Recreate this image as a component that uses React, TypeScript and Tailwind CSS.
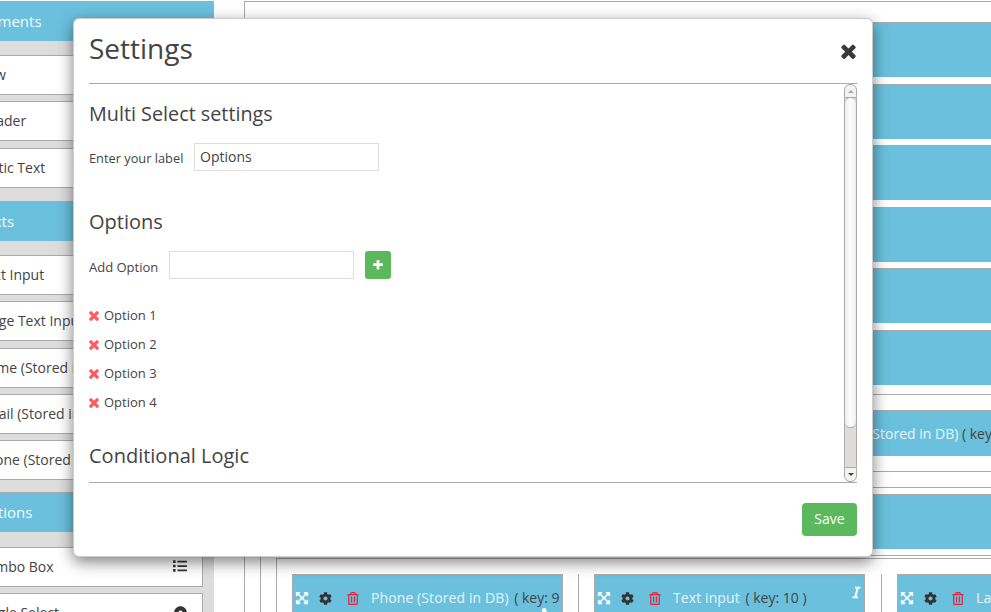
import { FaCog, FaDotCircle, FaExpandArrowsAlt, FaItalic, FaList, FaPhoneAlt, FaRegTrashAlt } from "react-icons/fa";

const elements = ["Row", "Header", "Static Text"];
const texts = ["Text Input", "Large Text Input", "Name (Stored in DB)", "Email (Stored in DB)", "Phone (Stored in DB)"];
const bars = [1, 2, 3, 4, 5, 6];
const options = ["Option 1", "Option 2", "Option 3", "Option 4"];

function TimesIcon({ className }: { className: string }) {
  return (
    <svg viewBox="302 238 1188 1316" className={className} fill="currentColor">
      <path d="M1490 1322q0 40-28 68l-136 136q-28 28-68 28t-68-28l-294-294-294 294q-28 28-68 28t-68-28l-136-136q-28-28-28-68t28-68l294-294-294-294q-28-28-28-68t28-68l136-136q28-28 68-28t68 28l294 294 294-294q28-28 68-28t68 28l136 136q28 28 28 68t-28 68l-294 294 294 294q28 28 28 68z" />
    </svg>
  );
}

function PlusIcon({ className }: { className: string }) {
  return (
    <svg viewBox="192 192 1408 1408" className={className} fill="currentColor">
      <path d="M1600 736v192q0 40-28 68t-68 28h-416v416q0 40-28 68t-68 28h-192q-40 0-68-28t-28-68v-416h-416q-40 0-68-28t-28-68v-192q0-40 28-68t68-28h416v-416q0-40 28-68t68-28h192q40 0 68 28t28 68v416h416q40 0 68 28t28 68z" />
    </svg>
  );
}

function SectionTitle({ title }: { title: string }) {
  return (
    <div className="h-[40px] bg-[#6bc0dd] border-t border-r border-[#aaaaaa] flex items-center text-[15px] text-[#f4fbfd]">
      <span className="ml-[-1px]">{title}</span>
    </div>
  );
}

function Item({ label, icon }: { label: string; icon?: React.ReactNode }) {
  return (
    <div className="h-[40px] mb-[6.3px] mr-[11px] bg-white border-y border-r border-[#aaaaaa] pr-[15px] flex items-center justify-between text-[14px] whitespace-nowrap text-[#444444]">
      <span className="mt-[-1px]">{label}</span>
      {icon}
    </div>
  );
}

function Cell({ name, keyNo, children }: { name: string; keyNo: number; children?: React.ReactNode }) {
  return (
    <div className="relative w-[271px] h-[80px] overflow-hidden whitespace-nowrap bg-[#6bc0dd] border border-[#aaaaaa] pl-[2px] pt-[13px] text-[14px] leading-[20px] text-[#444444]">
      <FaExpandArrowsAlt className="inline-block w-[14px] h-[14px] text-white align-[-2px]" />
      <FaCog className="inline-block w-[13px] h-[13px] ml-[10px] text-[#333333] align-[-2px]" />
      <FaRegTrashAlt className="inline-block w-[12px] h-[13px] ml-[15px] text-[#e0263c] align-[-2px]" />
      <span className="ml-[12px] mr-[2px] text-[#e6f5fa] tracking-[0.1px]">{name}</span> ( key: {keyNo} )
      {children}
    </div>
  );
}

export default function App() {
  return (
    <div className="relative w-[991px] h-[612px] overflow-hidden bg-white font-['Open_Sans',sans-serif] text-[#444444]">
      <div className="flex pt-px">
        {/* left palette, scrolled a bit off the page */}
        <div className="w-[236px] ml-[-22px] shrink-0 bg-[#dddddd]">
          <SectionTitle title="Elements" />
          <div className="pt-[14px] pb-[7.1px]">
            {elements.map((e) => (
              <Item key={e} label={e} />
            ))}
          </div>
          <SectionTitle title="Texts" />
          <div className="pt-[14px] pb-[5.5px]">
            {texts.map((e) => (
              <Item key={e} label={e} />
            ))}
          </div>
          <SectionTitle title="Options" />
          <div className="pt-[15px]">
            <Item label="Combo Box" icon={<FaList className="w-[14px] h-[14px] mt-[-2px] text-[#333333]" />} />
            <Item label="Single Select" icon={<FaDotCircle className="w-[13px] h-[13px] mt-[-2px] text-[#333333]" />} />
          </div>
        </div>

        {/* form canvas */}
        <div className="ml-[30px] flex-1 min-w-[760px] border-l border-t border-[#aaaaaa] pl-[15px]">
          <div className="pt-[20px]">
            {bars.map((b) => (
              <div key={b} className="h-[55px] mb-[6.5px] bg-[#6bc0dd] border-t border-[#aaaaaa]" />
            ))}
          </div>
          <div className="mt-[9.5px] border-t border-[#aaaaaa] pt-[15px] pb-[15px]">
            <div className="h-[46px] bg-[#6bc0dd] border-y border-[#aaaaaa] pl-[569px] flex items-center whitespace-nowrap text-[14px] text-[#444444]">
              <span className="text-[#e6f5fa]">Email (Stored in DB)</span>&nbsp;( key: 8 )
            </div>
          </div>
          <div className="h-[16px] border-t border-[#aaaaaa]" />
          <div className="border-t border-[#aaaaaa] pt-[6px] pb-[6px]">
            <div className="h-[55px] bg-[#6bc0dd] border-t border-[#aaaaaa]" />
          </div>
          <div className="border-t border-l border-[#aaaaaa] pl-[15px] pt-[2px]">
            <div className="flex border-t border-l border-[#aaaaaa] pt-[15px]">
              <div className="w-[302px] shrink-0 border-r border-[#aaaaaa] pl-[15px]">
                <Cell name="Phone (Stored in DB)" keyNo={9}>
                  <FaPhoneAlt className="absolute right-[8px] top-[33px] w-[12px] h-[12px] text-white" />
                </Cell>
              </div>
              <div className="w-[303px] shrink-0 border-r border-[#aaaaaa] pl-[15px]">
                <Cell name="Text input" keyNo={10}>
                  <FaItalic className="absolute right-[3px] top-[11px] w-[9px] h-[13px] text-white" />
                </Cell>
              </div>
              <div className="w-[302px] shrink-0 pl-[15px]">
                <Cell name="Large Text" keyNo={11} />
              </div>
            </div>
          </div>
        </div>
      </div>

      {/* settings dialog */}
      <div className="absolute left-[73px] top-[18px] w-[800px] h-[539px] bg-white border border-[#00000033] rounded-[6px] shadow-[0_5px_15px_rgba(0,0,0,0.5)] px-[15px]">
        <div className="h-[65px] border-b border-[#aaaaaa] flex items-center justify-between">
          <div className="text-[28px] leading-[40px] mt-[-7px]">Settings</div>
          <TimesIcon className="w-[15px] h-[16px] mr-px text-[#3a3a3a]" />
        </div>

        <div className="h-[399px] flex border-b border-[#aaaaaa]">
          <div className="flex-1 overflow-hidden pt-[15px]">
            <div className="text-[19.8px] leading-[30px]">Multi Select settings</div>
            <div className="flex items-center mt-[14px] text-[13px]">
              <span className="w-[105px] pt-[3px] text-[12.8px]">Enter your label</span>
              <div className="w-[185px] h-[28px] border border-[#dddddd] pl-[5px] pb-[2px] flex items-center text-[14px]">Options</div>
            </div>
            <div className="text-[20px] leading-[30px] mt-[36px]">Options</div>
            <div className="flex items-center mt-[14px] text-[13px]">
              <span className="w-[80px] pt-[6px]">Add Option</span>
              <div className="w-[185px] h-[28px] border border-[#dddddd]" />
              <div className="ml-[11px] w-[26px] h-[28px] rounded-[3px] bg-[#5cb85c] flex items-center justify-center">
                <PlusIcon className="w-[10px] h-[10px] text-white" />
              </div>
            </div>
            <div className="mt-[22px]">
              {options.map((o) => (
                <div key={o} className="h-[29px] flex items-center text-[13px]">
                  <TimesIcon className="w-[10px] h-[11px] mr-[5px] text-[#ff5a5f]" />
                  {o}
                </div>
              ))}
            </div>
            <div className="text-[20px] leading-[30px] mt-[24px]">Conditional Logic</div>
          </div>

          {/* scrollbar */}
          <div className="w-[13px] flex flex-col">
            <div className="h-[14px] bg-[#f4f3f2] border border-[#aaaaaa] rounded-t-[6px] flex items-center justify-center">
              <div className="w-0 h-0 border-x-[3px] border-x-transparent border-b-[3px] border-b-[#aaaaaa]" />
            </div>
            <div className="flex-1 flex flex-col border-x border-[#aaaaaa] bg-[#dddcdb]">
              <div className="h-[331px] mt-[-1px] bg-gradient-to-r from-[#eeeeee] via-[#fdfdfd] to-[#eeeeee] border-y border-[#aaaaaa] rounded-[6px]" />
            </div>
            <div className="h-[15px] bg-[#f4f3f2] border border-[#aaaaaa] rounded-b-[6px] flex items-center justify-center">
              <div className="w-0 h-0 border-x-[3px] border-x-transparent border-t-[3px] border-t-[#444444]" />
            </div>
          </div>
        </div>

        <div className="flex justify-end pt-[20px]">
          <div className="w-[55px] h-[33px] rounded-[4px] bg-[#5cb85c] pb-[2px] flex items-center justify-center text-[14px] text-white">Save</div>
        </div>
      </div>
    </div>
  );
}
